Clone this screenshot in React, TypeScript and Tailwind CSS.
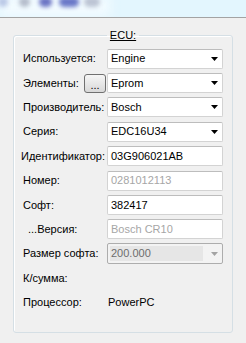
import React from 'react'

const Arrow = ({ disabled }: { disabled?: boolean }) => (
  <svg width="7" height="4" viewBox="0 0 7 4" className="shrink-0">
    <polygon points="0,0 7,0 3.5,4" fill={disabled ? '#a3a3a3' : '#000'} />
  </svg>
)

const Combo = ({ value }: { value: string }) => (
  <div className="w-[116px] h-[20px] flex items-center justify-between bg-white border border-[#d3d3d3] border-t-[#bdbdbd] rounded-[2px] pl-[3px] pr-[4px]">
    <span className="leading-[13px]">{value}</span>
    <Arrow />
  </div>
)

const Edit = ({ value, disabled }: { value: string; disabled?: boolean }) => (
  <div className="w-[116px] h-[20px] flex items-center bg-white border border-[#d3d3d3] border-t-[#bdbdbd] rounded-[2px] pl-[3px]">
    <span className={disabled ? 'leading-[13px] text-[#a6a6a6]' : 'leading-[13px]'}>{value}</span>
  </div>
)

const Row = ({ label, h, children, labelClass }: { label: string; h: string; children?: React.ReactNode; labelClass?: string }) => (
  <div className={`flex items-center ${h}`}>
    <span className={`w-[84px] shrink-0 leading-[13px] ${labelClass ?? ''}`}>{label}</span>
    {children}
  </div>
)

export default function App() {
  return (
    <div className="w-[246px] h-[343px] overflow-hidden bg-[#f0f0f0] text-[11px] text-black font-['Liberation_Sans',Arial,sans-serif]">
      {/* window strip */}
      <div className="relative h-[18px] bg-[#e3f6fe] border-b border-[#a3a3a3] overflow-hidden">
        <div className="absolute left-0 top-[-4px] w-[110px] h-[20px] bg-[#f3fbff] blur-[6px]" />
        <div className="absolute left-[-2px] top-[-3px] w-[10px] h-[10px] rounded-full bg-[#b9c7e6] blur-[2px]" />
        <div className="absolute left-[19px] top-[-3px] w-[11px] h-[10px] rounded-full bg-[#b4bccb] blur-[2px]" />
        <div className="absolute left-[39px] top-[-3px] w-[13px] h-[10px] rounded-full bg-[#6b74c4] blur-[2px]" />
        <div className="absolute left-[59px] top-[-3px] w-[20px] h-[10px] rounded-full bg-[#6a78c8] blur-[2px]" />
        <div className="absolute left-[84px] top-[-3px] w-[16px] h-[10px] rounded-full bg-[#bcc4d4] blur-[2px]" />
      </div>

      <fieldset className="ml-[13px] mt-[11px] w-[220px] h-[304px] border border-[#d5dfe5] rounded-[3px] shadow-[inset_1px_1px_0_#ffffff]">
        <legend className="mx-auto px-[3px] leading-[13px] underline">ECU:</legend>
        <div className="pl-[9px] pt-[4px] flex flex-col">
          <Row label="Используется:" h="h-[25px]"><Combo value="Engine" /></Row>
          <div className="flex items-center h-[24px]">
            <span className="w-[61px] shrink-0 leading-[13px]">Элементы:</span>
            <button className="w-[22px] h-[19px] mr-[1px] flex items-end justify-center pb-[3px] border border-[#707070] rounded-[3px] bg-gradient-to-b from-[#f6f6f6] to-[#d8d8d8] leading-[8px] text-[11px]">...</button>
            <Combo value="Eprom" />
          </div>
          <Row label="Производитель:" h="h-[24px]"><Combo value="Bosch" /></Row>
          <Row label="Серия:" h="h-[25px]"><Combo value="EDC16U34" /></Row>
          <Row label="Идентификатор:" h="h-[24px]" labelClass="-ml-[2px] mr-[2px]"><Edit value="03G906021AB" /></Row>
          <Row label="Номер:" h="h-[25px]"><Edit value="0281012113" disabled /></Row>
          <Row label="Софт:" h="h-[24px]"><Edit value="382417" /></Row>
          <Row label="...Версия:" h="h-[24px]" labelClass="pl-[5px]"><Edit value="Bosch CR10" disabled /></Row>
          <Row label="Размер софта:" h="h-[25px]">
            <div className="w-[116px] h-[21px] flex items-center justify-between bg-[#f3f3f3] border border-[#adadad] rounded-[2px] pl-[2px] pr-[4px]">
              <span className="w-[93px] h-[15px] flex items-center pl-[1px] bg-[#e6e6e6] text-[#6d6d6d] leading-[13px]">200.000</span>
              <Arrow disabled />
            </div>
          </Row>
          <Row label="К/сумма:" h="h-[24px]" />
          <Row label="Процессор:" h="h-[24px]"><span className="pl-[1px] leading-[13px]">PowerPC</span></Row>
        </div>
      </fieldset>
    </div>
  )
}
